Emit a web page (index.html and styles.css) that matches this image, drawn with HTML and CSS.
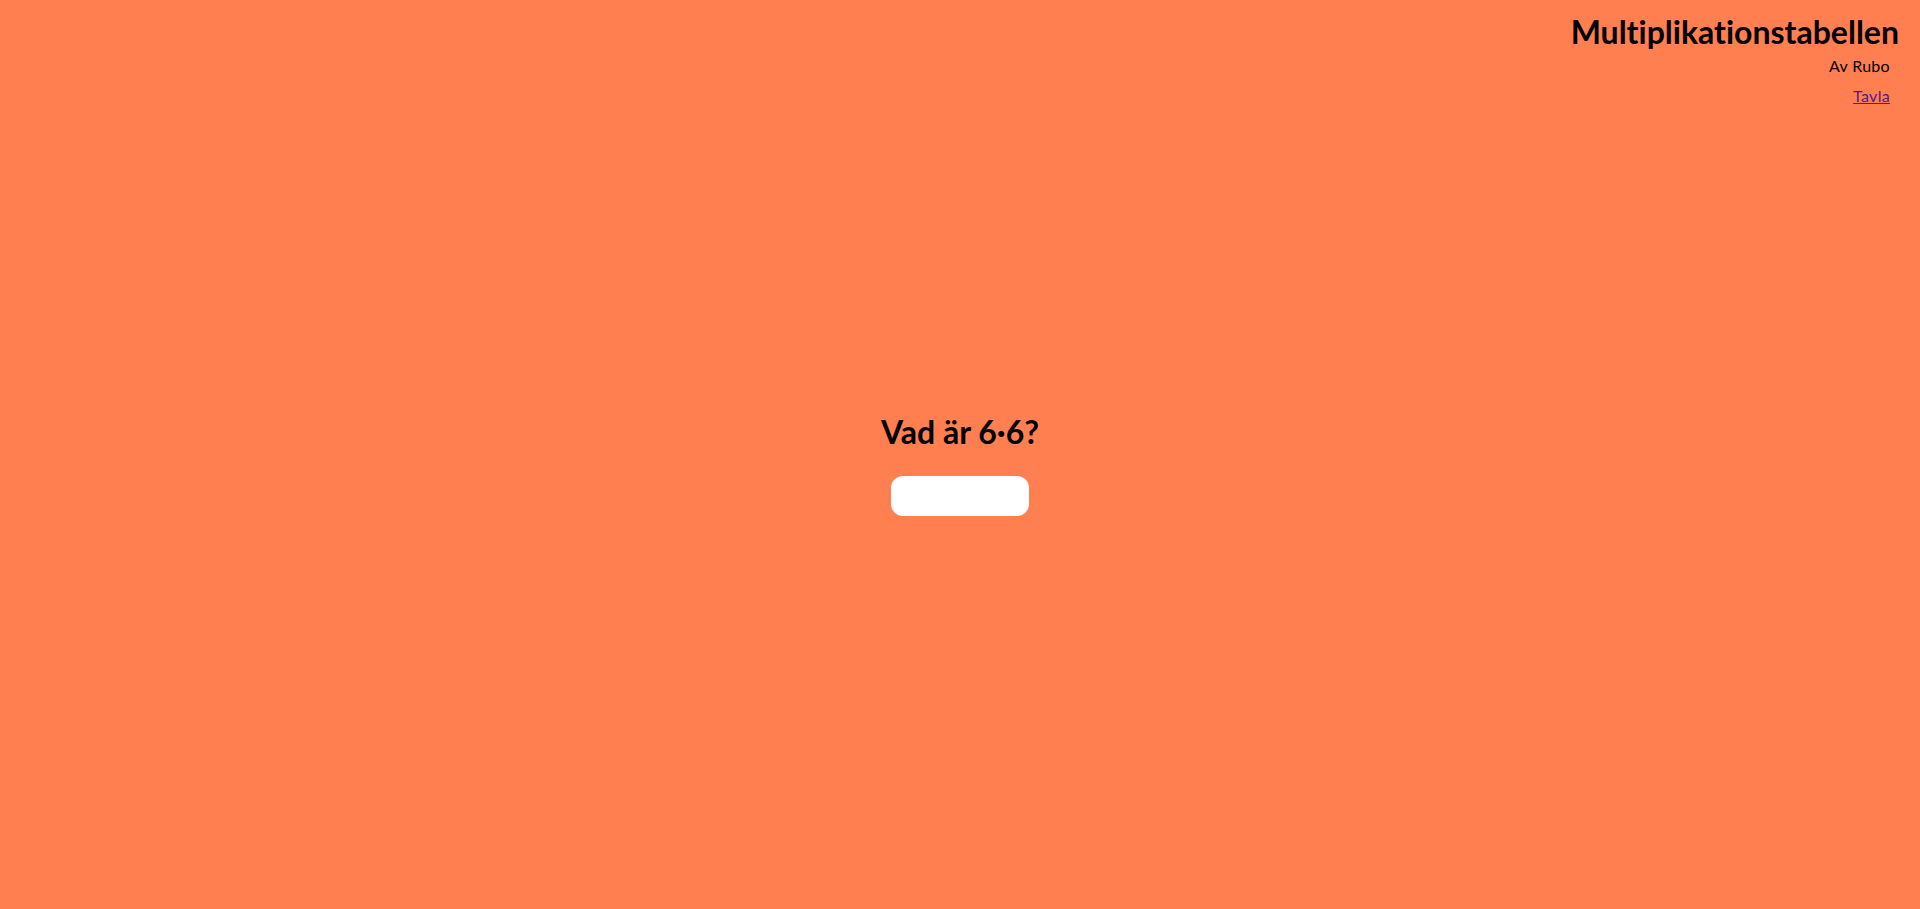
FILE: index.html
```html
<!DOCTYPE html>
<html lang="sv">
<head>
<meta charset="utf-8">
<title>Multiplikationstabellen</title>
<link rel="stylesheet" href="styles.css">
</head>
<body>
<div class="page">
  <header class="header">
    <h1 class="title">Multiplikationstabellen</h1>
    <p class="author">Av Rubo</p>
    <a class="link" href="#tavla">Tavla</a>
  </header>
  <main class="quiz">
    <h2 class="question">Vad är 6·6?</h2>
    <input class="answer" type="text" aria-label="Svar">
  </main>
</div>
</body>
</html>
```

FILE: styles.css
```css
html, body {
  margin: 0;
  padding: 0;
}
body {
  background: #ff7f50;
  font-family: Lato, "Open Sans", sans-serif;
  font-variant-ligatures: none;
  color: #000;
}
.page {
  display: grid;
  min-height: 100vh;
}
.header, .quiz {
  grid-area: 1 / 1;
}
.header {
  display: flex;
  flex-direction: column;
  align-items: flex-end;
  padding: 12px 21px 0 0;
}
.title {
  margin: 0;
  font-size: 32px;
  font-weight: 700;
  line-height: 40px;
}
.author {
  margin: 4px 9px 0 0;
  font-size: 16px;
  line-height: 20px;
  letter-spacing: 0.3px;
}
.link {
  margin: 10px 9px 0 0;
  font-size: 16px;
  line-height: 20px;
  letter-spacing: 0.3px;
  color: #551a8b;
}
.quiz {
  display: flex;
  flex-direction: column;
  align-items: center;
  justify-content: center;
  padding-top: 18px;
}
.question {
  margin: 0 0 24px;
  font-size: 32px;
  font-weight: 700;
  line-height: 40px;
}
.answer {
  width: 138px;
  height: 40px;
  box-sizing: border-box;
  border: none;
  border-radius: 12px;
  background: #fff;
  outline: none;
}
```
